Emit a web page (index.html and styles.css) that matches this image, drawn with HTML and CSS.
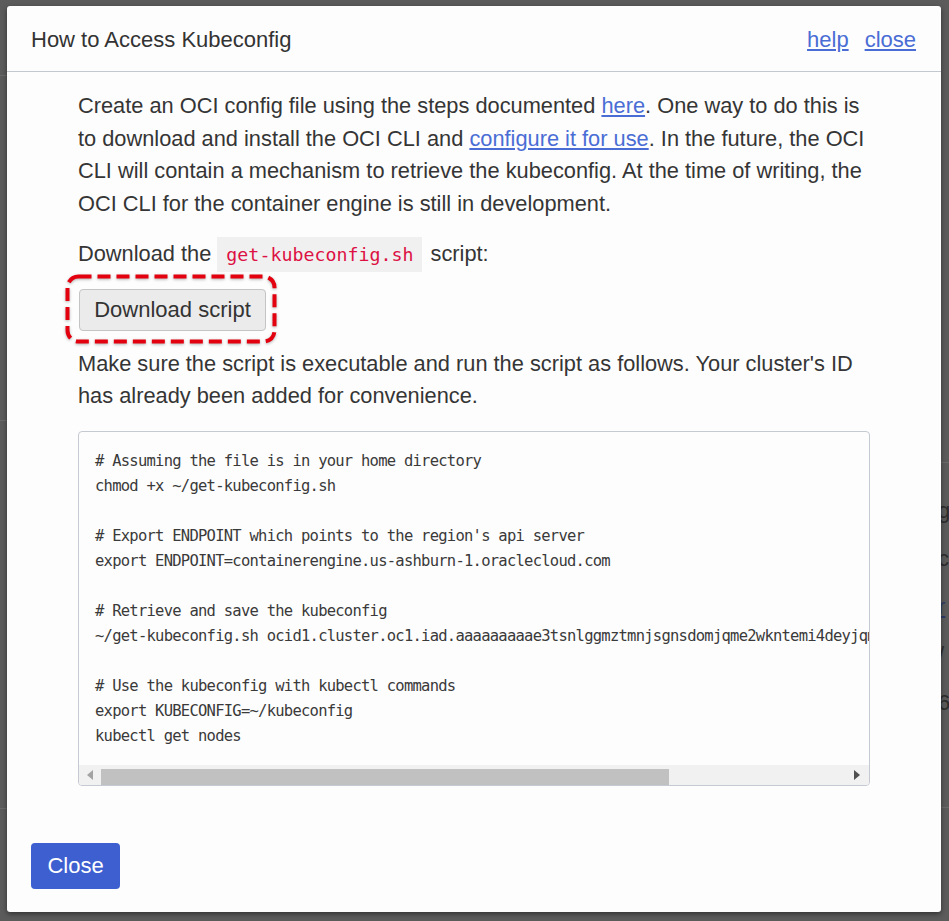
FILE: index.html
```html
<!DOCTYPE html>
<html lang="en">
<head>
<meta charset="utf-8">
<title>How to Access Kubeconfig</title>
<link rel="stylesheet" href="styles.css">
</head>
<body>
<div class="page">
  <div class="page-left">
    <div class="pl-row pl-r1"></div>
    <div class="pl-row pl-r2"></div>
    <div class="pl-row pl-r3"></div>
  </div>
  <div class="page-right">
    <div class="pr-top"></div>
    <div class="pr-text">
      <div>g</div>
      <div>c</div>
      <div class="pr-link">r</div>
      <div>/</div>
      <div>6</div>
    </div>
  </div>
</div>

<div class="dialog" role="dialog">
  <div class="dlg-header">
    <div class="dlg-title">How to Access Kubeconfig</div>
    <div class="dlg-links">
      <a href="#" class="lnk">help</a>
      <a href="#" class="lnk">close</a>
    </div>
  </div>
  <div class="dlg-body">
    <p class="txt">Create an OCI config file using the steps documented <a href="#" class="lnk">here</a>. One way to do this is to download and install the OCI CLI and <a href="#" class="lnk">configure it for use</a>. In the future, the OCI CLI will contain a mechanism to retrieve the kubeconfig. At the time of writing, the OCI CLI for the container engine is still in development.</p>
    <p class="txt">Download the <code class="inline-code">get-kubeconfig.sh</code> script:</p>
    <div class="btn-row">
      <span class="hl">
        <button class="btn-secondary" type="button">Download script</button>
        <svg class="hl-ring" width="213" height="71" viewBox="0 0 213 71" aria-hidden="true">
          <rect x="2.5" y="2.5" width="207" height="65" rx="11" ry="11" fill="none" stroke="#e3000f" stroke-width="4" stroke-dasharray="13 6"/>
        </svg>
      </span>
    </div>
    <p class="txt txt-last">Make sure the script is executable and run the script as follows. Your cluster's ID has already been added for convenience.</p>
    <div class="code-box">
<pre class="code"># Assuming the file is in your home directory
chmod +x ~/get-kubeconfig.sh

# Export ENDPOINT which points to the region's api server
export ENDPOINT=containerengine.us-ashburn-1.oraclecloud.com

# Retrieve and save the kubeconfig
~/get-kubeconfig.sh ocid1.cluster.oc1.iad.aaaaaaaaae3tsnlggmztmnjsgnsdomjqme2wkntemi4deyjqmzrgm3tgm3dc > ~/kubeconfig

# Use the kubeconfig with kubectl commands
export KUBECONFIG=~/kubeconfig
kubectl get nodes</pre>
      <div class="hscroll">
        <span class="sb-arrow"><span class="tri-left"></span></span>
        <span class="sb-thumb"></span>
        <span class="sb-rest"></span>
        <span class="sb-arrow"><span class="tri-right"></span></span>
      </div>
    </div>
  </div>
  <div class="dlg-footer">
    <button class="btn-primary" type="button">Close</button>
  </div>
</div>
</body>
</html>
```

FILE: styles.css
```css
html, body {
  margin: 0;
  padding: 0;
}

body {
  width: 949px;
  height: 921px;
  overflow: hidden;
  background: #5b5b5b;
  font-family: "Liberation Sans", Arial, sans-serif;
  position: relative;
}

/* ---------- dimmed page behind the modal ---------- */
.page {
  display: grid;
  grid-template-columns: 938px 11px;
  height: 921px;
}

.page-left {
  display: flex;
  flex-direction: column;
}

.pl-row {
  border-bottom: 1px solid #6a6a6a;
}

.pl-r1 { height: 75px; }
.pl-r2 { height: 344px; }
.pl-r3 { height: 387px; }

.page-right {
  display: flex;
  flex-direction: column;
  overflow: hidden;
}

.pr-top {
  height: 462px;
  border-bottom: 1px solid #6a6a6a;
}

.pr-text {
  padding-top: 24px;
  font-size: 22px;
  line-height: 48px;
  color: #2c2c2c;
  white-space: nowrap;
  border-bottom: 1px solid #6a6a6a;
  height: 320px;
}

.pr-link {
  color: #2a3a66;
  text-decoration: underline;
}

/* ---------- dialog ---------- */
.dialog {
  position: absolute;
  left: 7px;
  top: 6px;
  width: 934px;
  height: 906px;
  box-sizing: border-box;
  background: #fdfdfd;
  border-radius: 3px;
  box-shadow: 0 2px 5px rgba(0, 0, 0, 0.45);
  display: flex;
  flex-direction: column;
  color: #353535;
}

.dlg-header {
  height: 66px;
  box-sizing: border-box;
  border-bottom: 1px solid #c3c7cf;
  display: flex;
  align-items: center;
  justify-content: space-between;
  padding: 2px 25px 0 24px;
}

.dlg-title {
  font-size: 22px;
  color: #333;
}

.dlg-links {
  display: flex;
  gap: 16px;
  font-size: 22px;
}

.lnk {
  color: #4a6dd5;
  text-decoration: underline;
}

.dlg-body {
  padding: 18px 64px 0 71px;
}

.txt {
  margin: 0 0 17px;
  font-size: 21.8px;
  line-height: 32.7px;
  color: #353535;
}

.txt-last {
  margin-bottom: 18px;
}

.inline-code {
  font-family: "DejaVu Sans Mono", "Liberation Mono", monospace;
  font-size: 18.3px;
  color: #dd1144;
  background: #f0f0f0;
  padding: 7px 9px;
  margin: 0 2px 0 0;
}

.btn-row {
  margin: 3px 0 17px 1px;
  height: 42px;
}

.hl {
  position: relative;
  display: inline-block;
}

.btn-secondary {
  display: block;
  width: 187px;
  height: 42px;
  box-sizing: border-box;
  font-family: "Liberation Sans", Arial, sans-serif;
  font-size: 22px;
  color: #333;
  background: #ebebeb;
  border: 1px solid #c4c4c4;
  border-radius: 4px;
  padding: 0;
}

.hl-ring {
  position: absolute;
  left: -14px;
  top: -15px;
  filter: drop-shadow(0 1px 1.5px rgba(0, 0, 0, 0.3));
  pointer-events: none;
}

/* ---------- code box ---------- */
.code-box {
  width: 792px;
  box-sizing: border-box;
  border: 1px solid #c5c9d2;
  border-radius: 4px;
  background: #fdfdfd;
  overflow: hidden;
}

.code {
  margin: 0;
  padding: 17px 16px 16px;
  font-family: "DejaVu Sans Mono", "Liberation Mono", monospace;
  font-size: 15.5px;
  letter-spacing: -0.75px;
  line-height: 25px;
  color: #3a3a3a;
  white-space: pre;
  overflow: hidden;
}

.hscroll {
  height: 20px;
  background: #f1f1f1;
  display: flex;
  align-items: center;
}

.sb-arrow {
  width: 22px;
  height: 20px;
  display: flex;
  align-items: center;
  justify-content: center;
}

.tri-left {
  width: 0;
  height: 0;
  border-top: 5px solid transparent;
  border-bottom: 5px solid transparent;
  border-right: 6px solid #a3a3a3;
}

.tri-right {
  width: 0;
  height: 0;
  border-top: 5px solid transparent;
  border-bottom: 5px solid transparent;
  border-left: 6px solid #505050;
  margin-right: 2px;
}

.sb-thumb {
  width: 568px;
  height: 16px;
  margin-top: 4px;
  background: #c1c1c1;
}

.sb-rest {
  flex: 1;
}

/* ---------- footer ---------- */
.dlg-footer {
  margin-top: auto;
  padding: 0 24px 23px;
}

.btn-primary {
  width: 89px;
  height: 46px;
  font-family: "Liberation Sans", Arial, sans-serif;
  font-size: 22px;
  color: #ffffff;
  background: #3d5fd0;
  border: none;
  border-radius: 4px;
  padding: 0;
}
```
